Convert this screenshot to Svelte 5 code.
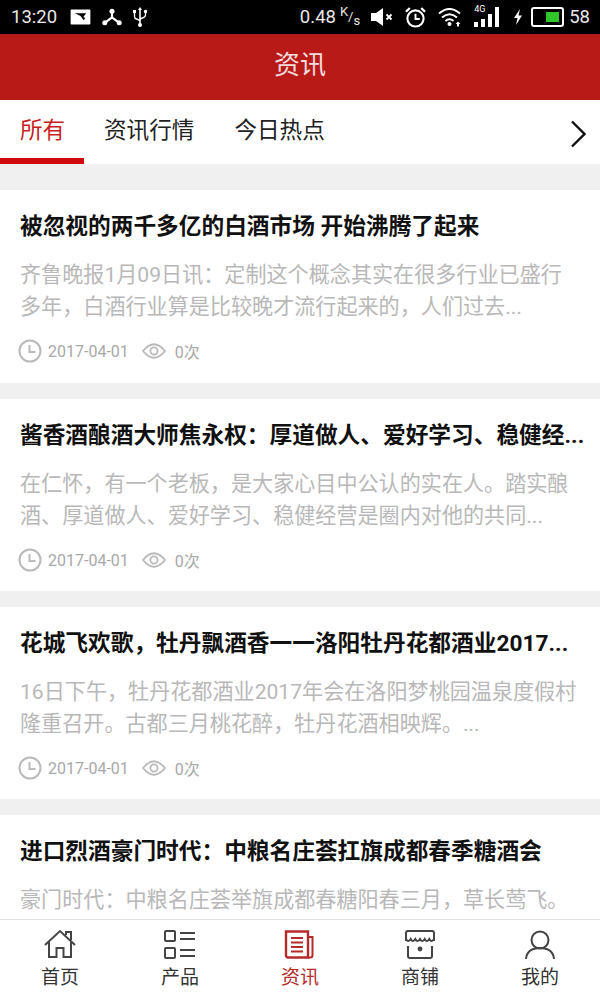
<script>
    const tabs = ["所有", "资讯行情", "今日热点"];

    const news = [
        {
            title: "被忽视的两千多亿的白酒市场 开始沸腾了起来",
            desc: "齐鲁晚报1月09日讯：定制这个概念其实在很多行业已盛行多年，白酒行业算是比较晚才流行起来的，人们过去...",
        },
        {
            title: "酱香酒酿酒大师焦永权：厚道做人、爱好学习、稳健经...",
            desc: "在仁怀，有一个老板，是大家心目中公认的实在人。踏实酿酒、厚道做人、爱好学习、稳健经营是圈内对他的共同...",
        },
        {
            title: "花城飞欢歌，牡丹飘酒香一一洛阳牡丹花都酒业2017...",
            desc: "16日下午，牡丹花都酒业2017年会在洛阳梦桃园温泉度假村隆重召开。古都三月桃花醉，牡丹花酒相映辉。...",
        },
        {
            title: "进口烈酒豪门时代：中粮名庄荟扛旗成都春季糖酒会",
            desc: "豪门时代：中粮名庄荟举旗成都春糖阳春三月，草长莺飞。",
        },
    ];

    const nav = [
        { label: "首页", icon: "home" },
        { label: "产品", icon: "list" },
        { label: "资讯", icon: "news", active: true },
        { label: "商铺", icon: "shop" },
        { label: "我的", icon: "user" },
    ];
</script>

<div class="page">
    <div class="status">
        <div class="status-left">
            <span class="time">13:20</span>
            <svg width="21" height="16" viewBox="0 0 22 17">
                <rect x="0.5" y="0.5" width="21" height="16" rx="1" fill="#fff" />
                <path d="M5 4.500h12l-3 4 2 1-1.500 2.500-3.500-4.500-6-3z" fill="#000" />
            </svg>
            <svg class="gap-share" width="20" height="18" viewBox="0 0 22 20">
                <circle cx="11" cy="3.500" r="2.800" fill="#fff" />
                <circle cx="3" cy="16.500" r="2.800" fill="#fff" />
                <circle cx="19" cy="16.500" r="2.800" fill="#fff" />
                <path d="M11 4v6.500L3 16.500M11 10.500l8 6" stroke="#fff" stroke-width="2.400" fill="none" />
            </svg>
            <svg class="gap-usb" width="14" height="22" viewBox="0 0 14 22">
                <path d="M7 1l2 3H5zM6.200 3.500h1.600v15H6.200z" fill="#fff" />
                <circle cx="7" cy="19" r="2" fill="#fff" />
                <path d="M1.500 6v4.500q0 2 2 2.500L7 14.500M12.500 6v3q0 2-2 2.500L7 13" stroke="#fff" stroke-width="1.400" fill="none" />
                <rect x="0" y="4" width="3" height="3" fill="#fff" />
                <circle cx="12.500" cy="5.500" r="1.700" fill="#fff" />
            </svg>
        </div>
        <div class="status-right">
            <span class="speed">0.48</span>
            <span class="unit"><sup>K</sup>/<sub>s</sub></span>
            <svg class="gap-mute" width="22" height="18" viewBox="0 0 22 18">
                <path d="M0 5h5l7-5v18l-7-5H0z" fill="#fff" />
                <path d="M15.500 6.500l5 5M20.500 6.500l-5 5" stroke="#fff" stroke-width="1.800" />
            </svg>
            <svg class="gap-alarm" width="21" height="21" viewBox="0 0 22 22">
                <circle cx="11" cy="12" r="8.500" fill="none" stroke="#fff" stroke-width="2.200" />
                <path d="M11 7v5.500h4.500" fill="none" stroke="#fff" stroke-width="2" />
                <path d="M1 5l4-4M21 5l-4-4" stroke="#fff" stroke-width="2.400" />
            </svg>
            <svg class="gap-wifi" width="24" height="20" viewBox="0 0 24 20">
                <path d="M1 6.500q10.500-9 21 0M4 10.500q7.500-6.500 15 0M7.500 14q4-3.500 8 0" fill="none" stroke="#fff" stroke-width="2" />
                <circle cx="11.500" cy="17" r="2" fill="#fff" />
                <path d="M20 14.500l2.500 2.500h-1.500v2.500h-2V17h-1.500z" fill="#fff" />
            </svg>
            <span class="signal">
                <span class="tag">4G</span>
                <span class="bar b1"></span>
                <span class="bar b2"></span>
                <span class="bar b3"></span>
                <span class="bar b4"></span>
            </span>
            <svg class="gap-bolt" width="10" height="16" viewBox="0 0 10 16">
                <path d="M7 0L1 9h3.500L3 16l6-9.500H5.500z" fill="#fff" />
            </svg>
            <div class="battery"><div class="level"></div></div>
            <span class="percent">58</span>
        </div>
    </div>

    <header class="header">资讯</header>

    <div class="tabs">
        {#each tabs as tab, i}
            <div class="tab" class:active={i === 0}>{tab}</div>
        {/each}
        <svg class="more" width="16" height="28" viewBox="0 0 16 28">
            <path d="M2 1.500L14.500 14 2 26.500" fill="none" stroke="#111" stroke-width="2.400" />
        </svg>
    </div>

    <main class="list">
        {#each news as item}
            <article class="card">
                <h2>{item.title}</h2>
                <p>{item.desc}</p>
                <div class="meta">
                    <svg width="24" height="24" viewBox="0 0 24 24">
                        <circle cx="12" cy="12" r="10.500" fill="none" stroke="#b9b9b9" stroke-width="2" />
                        <path d="M11.500 6v7h6" fill="none" stroke="#b9b9b9" stroke-width="2" />
                    </svg>
                    <span class="date">2017-04-01</span>
                    <svg class="eye" width="24" height="16" viewBox="0 0 24 16">
                        <path d="M1 8q11-13.500 22 0Q12 21.500 1 8z" fill="none" stroke="#b9b9b9" stroke-width="1.800" />
                        <circle cx="12" cy="8" r="3.600" fill="none" stroke="#b9b9b9" stroke-width="1.800" />
                    </svg>
                    <span class="views">0次</span>
                </div>
            </article>
        {/each}
    </main>

    <nav class="nav">
        {#each nav as n}
            <div class="nav-item" class:active={n.active}>
                <svg width="34" height="32" viewBox="0 0 34 32" fill="none" stroke="currentColor" stroke-width="2">
                    {#if n.icon === "home"}
                        <path d="M2 16L17 2l15 14" />
                        <path d="M6 13v15h7.500v-9h7v9H28V13" />
                        <path d="M23 6V3h5v8" />
                    {:else if n.icon === "list"}
                        <rect x="2" y="2" width="10" height="10" rx="1" />
                        <rect x="2" y="19" width="10" height="10" rx="1" />
                        <path d="M17 4h15M17 10h15M17 21h15M17 27h15" />
                    {:else if n.icon === "news"}
                        <path d="M3 2.500h22v26H5q-2 0-2-2z" stroke-width="2.400" />
                        <path d="M25 8h4.500v18.500q0 2-2 2H25" stroke-width="2" />
                        <path d="M8 9h12M8 13.500h12M8 18h12M8 22.500h12" stroke-width="2.200" />
                    {:else if n.icon === "shop"}
                        <path d="M3 12V4q0-2 2-2h24q2 0 2 2v8" />
                        <path d="M3 10q2.300 4 4.670 0q2.300 4 4.670 0q2.300 4 4.660 0q2.300 4 4.670 0q2.300 4 4.670 0q2.300 4 4.660 0" />
                        <path d="M5 17v10q0 2 2 2h20q2 0 2-2V17" />
                        <circle cx="17" cy="20" r="2.400" fill="currentColor" stroke="none" />
                    {:else}
                        <circle cx="17" cy="11" r="8.500" />
                        <path d="M3 30q1-11 14-11t14 11" />
                    {/if}
                </svg>
                <span>{n.label}</span>
            </div>
        {/each}
    </nav>
</div>

<style>
    :global(body) {
        margin: 0;
        background: #fff;
    }

    .page {
        position: relative;
        display: flex;
        flex-direction: column;
        width: 600px;
        height: 1000px;
        overflow: hidden;
        background: #f0f0f0;
        font-family: Roboto, "Noto Sans CJK SC", sans-serif;
    }

    .status {
        flex: none;
        display: flex;
        justify-content: space-between;
        align-items: center;
        height: 34px;
        padding: 0 10px 0 11px;
        background: #000;
        color: #e8e8e8;
        font-size: 18.500px;
    }

    .status-left,
    .status-right {
        display: flex;
        align-items: center;
    }

    .time {
        margin-right: 13px;
    }

    .gap-share {
        margin-left: 11px;
    }

    .gap-usb {
        margin-left: 11px;
    }

    .unit {
        margin-left: 4px;
        font-size: 13px;
        line-height: 20px;
    }

    .unit sup,
    .unit sub {
        font-size: 13px;
        line-height: 0;
    }

    .gap-mute {
        margin-left: 11px;
    }

    .gap-alarm {
        margin-left: 12px;
    }

    .gap-wifi {
        margin-left: 12px;
    }

    .signal {
        position: relative;
        display: flex;
        align-items: flex-end;
        gap: 3px;
        height: 20px;
        margin-left: 12px;
    }

    .tag {
        position: absolute;
        top: -2px;
        left: 0;
        font-size: 9px;
        line-height: 9px;
        color: #fff;
    }

    .bar {
        width: 4px;
        background: #fff;
    }

    .b1 {
        height: 5px;
    }

    .b2 {
        height: 8px;
    }

    .b3 {
        height: 13px;
    }

    .b4 {
        height: 20px;
    }

    .gap-bolt {
        margin-left: 14px;
    }

    .battery {
        box-sizing: border-box;
        width: 33px;
        height: 20px;
        margin-left: 8px;
        padding: 3px 3px 3px 13px;
        border: 2px solid #fff;
        border-radius: 3px;
    }

    .level {
        height: 100%;
        background: #2fc52b;
    }

    .percent {
        margin-left: 5px;
    }

    .header {
        flex: none;
        height: 66px;
        line-height: 62px;
        text-align: center;
        font-size: 26px;
        color: #f3dcdc;
        background: #b81a18;
    }

    .tabs {
        flex: none;
        position: relative;
        display: flex;
        height: 64px;
        background: #fff;
    }

    .tab {
        box-sizing: border-box;
        height: 64px;
        padding: 0 20px;
        line-height: 62px;
        font-size: 22.600px;
        color: #222;
    }

    .tab.active {
        width: 84px;
        white-space: nowrap;
        color: #c81e1e;
        border-bottom: 6px solid #cf0a0a;
    }

    .more {
        position: absolute;
        top: 20px;
        right: 14px;
    }

    .list {
        flex: 1;
        display: flex;
        flex-direction: column;
        gap: 16px;
        padding-top: 26px;
        overflow: hidden;
    }

    .card {
        flex: none;
        box-sizing: border-box;
        height: 193px;
        padding: 20px 20px 0;
        background: #fff;
    }

    .card + .card {
        height: 192px;
    }

    h2 {
        margin: 0;
        height: 32px;
        line-height: 33px;
        font-size: 22.700px;
        font-weight: 700;
        color: #111;
        white-space: nowrap;
    }

    p {
        height: 64px;
        margin: 17px 0 0;
        line-height: 32px;
        font-size: 21.100px;
        color: #b8b8b8;
    }

    .meta {
        display: flex;
        align-items: center;
        height: 24px;
        margin-top: 16px;
        margin-left: -2px;
        font-size: 16px;
        color: #a8a8a8;
    }

    .date {
        margin-left: 6px;
    }

    .eye {
        margin-left: 13px;
    }

    .views {
        margin-left: 9px;
    }

    .nav {
        flex: none;
        display: grid;
        grid-template-columns: repeat(5, 1fr);
        height: 80px;
        background: #fff;
        border-top: 1px solid #e2e2e2;
    }

    .nav-item {
        display: flex;
        flex-direction: column;
        align-items: center;
        padding-top: 9px;
        color: #444;
    }

    .nav-item span {
        margin-top: 4px;
        font-size: 19px;
        line-height: 26px;
        color: #333;
    }

    .nav-item.active,
    .nav-item.active span {
        color: #b52a2a;
    }
</style>
